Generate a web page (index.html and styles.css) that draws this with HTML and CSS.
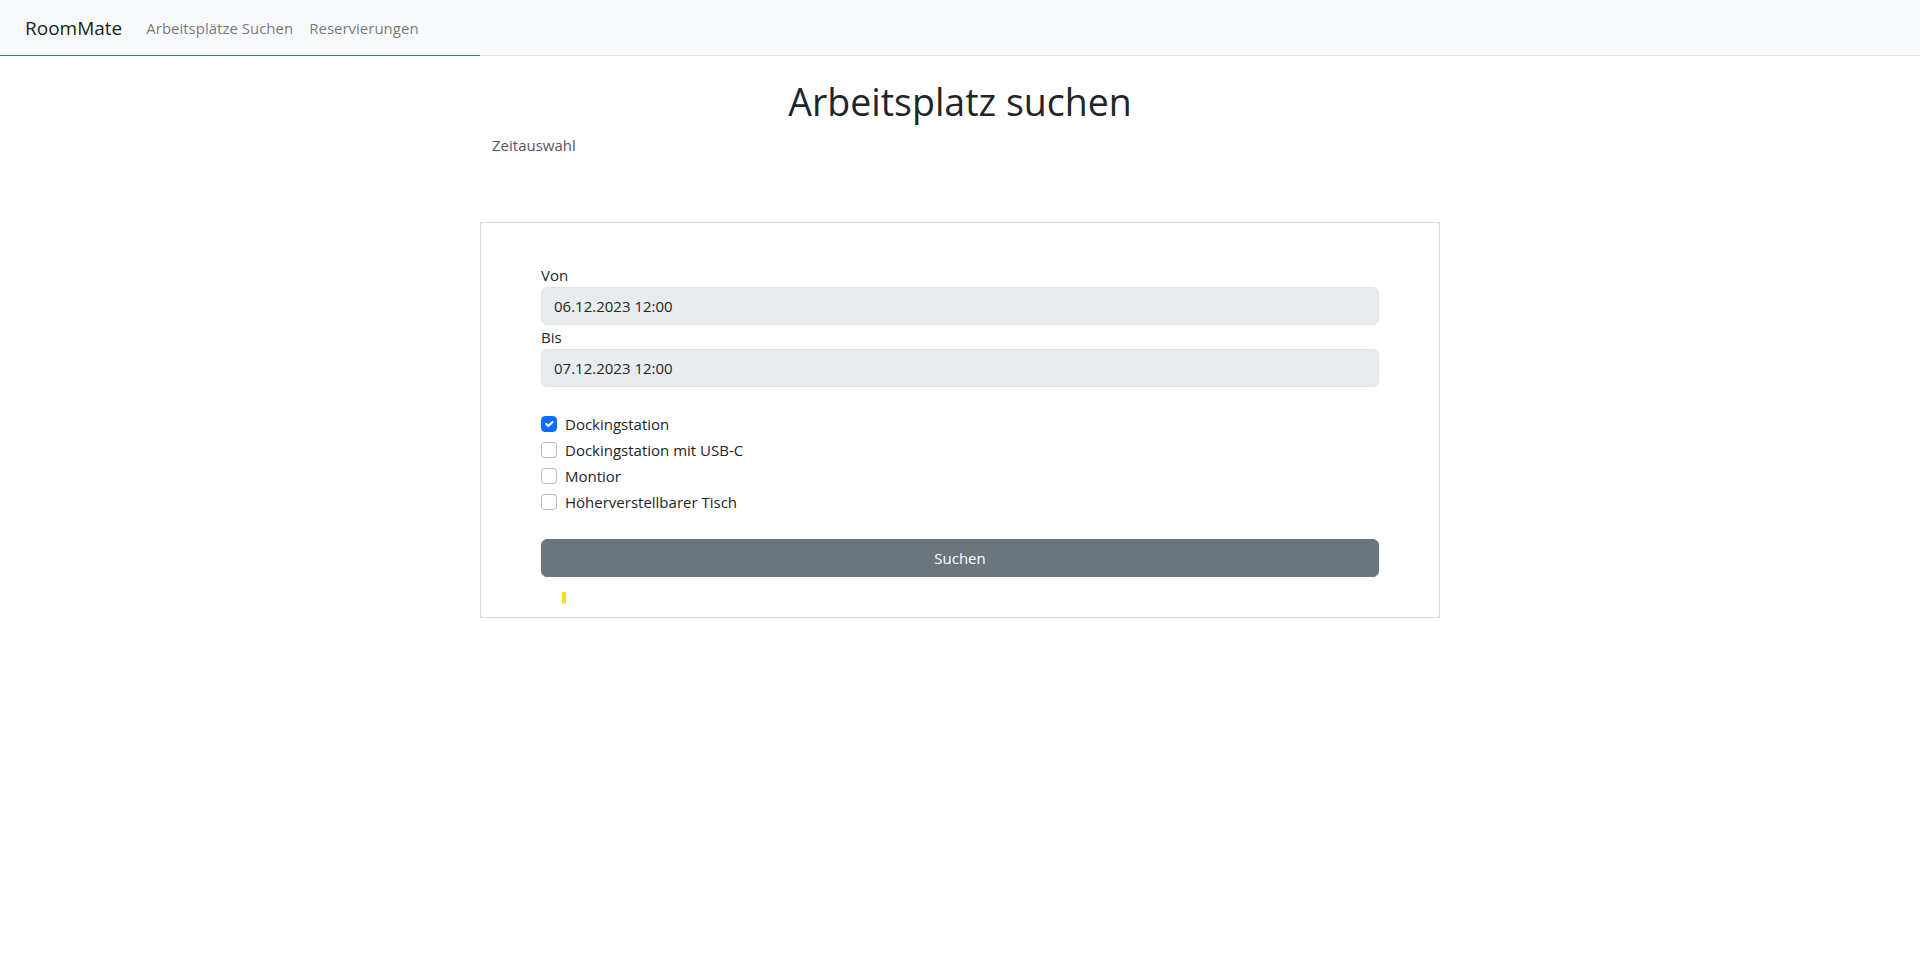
FILE: index.html
```html
<!DOCTYPE html>
<html lang="de">
<head>
<meta charset="utf-8">
<title>RoomMate</title>
<link rel="stylesheet" href="styles.css">
</head>
<body>
<nav class="navbar">
  <a class="brand" href="#">RoomMate</a>
  <ul class="nav-links">
    <li><a href="#">Arbeitsplätze Suchen</a></li>
    <li><a href="#">Reservierungen</a></li>
  </ul>
  <span class="nav-progress"></span>
</nav>
<main class="container">
  <h1 class="title">Arbeitsplatz suchen</h1>
  <div class="subnav">Zeitauswahl</div>
  <section class="card">
    <form class="search-form">
      <label class="field-label">Von</label>
      <input class="field-input" type="text" readonly value="06.12.2023 12:00">
      <label class="field-label">Bis</label>
      <input class="field-input" type="text" readonly value="07.12.2023 12:00">
      <div class="checks">
        <label class="check-row">
          <span class="check-box checked"><svg viewBox="0 0 20 20" width="16" height="16"><path d="M6 10l3 3l6-6" fill="none" stroke="#fff" stroke-width="3" stroke-linecap="round" stroke-linejoin="round"/></svg></span>
          <span class="check-text">Dockingstation</span>
        </label>
        <label class="check-row">
          <span class="check-box"></span>
          <span class="check-text">Dockingstation mit USB-C</span>
        </label>
        <label class="check-row">
          <span class="check-box"></span>
          <span class="check-text">Montior</span>
        </label>
        <label class="check-row">
          <span class="check-box"></span>
          <span class="check-text">Höherverstellbarer Tisch</span>
        </label>
      </div>
      <button class="btn-search" type="button">Suchen</button>
      <div class="status"><span class="status-mark"></span></div>
    </form>
  </section>
</main>
</body>
</html>
```

FILE: styles.css
```css
* { box-sizing: border-box; }
html, body { margin: 0; padding: 0; }
body {
  font-family: "Segoe UI", "Open Sans", "Noto Sans", sans-serif;
  font-size: 15px;
  line-height: 24px;
  color: #212529;
  background: #fff;
}
.navbar {
  position: relative;
  height: 56px;
  background: #f8f9fa;
  border-bottom: 1px solid #e6e6e6;
  display: flex;
  align-items: center;
  padding: 0 0 0 25px;
}
.brand {
  font-size: 19px;
  color: rgba(0,0,0,.9);
  text-decoration: none;
  margin-right: 16px;
  line-height: 30px;
}
.nav-links {
  list-style: none;
  display: flex;
  margin: 0;
  padding: 0;
}
.nav-links a {
  display: block;
  padding: 8px 8px;
  color: rgba(0,0,0,.55);
  text-decoration: none;
  line-height: 24px;
}
.nav-progress {
  position: absolute;
  left: 0;
  bottom: -1px;
  width: 480px;
  height: 1px;
  background: #3578b0;
}
.container {
  width: 960px;
  margin: 0 auto;
}
.title {
  margin: 22px 0 7px;
  font-size: 37.5px;
  font-weight: 400;
  line-height: 48px;
  text-align: center;
}
.subnav {
  padding-left: 12px;
  color: #555;
  line-height: 24px;
}
.card {
  margin-top: 65px;
  border: 1px solid #d4d4d4;
  padding: 40px 60px 14px;
}
.search-form {
  display: flex;
  flex-direction: column;
}
.field-label {
  line-height: 24px;
}
.field-input {
  height: 38px;
  padding: 6px 12px;
  font: inherit;
  color: #212529;
  background: #e9ecef;
  border: 1px solid #dee2e6;
  border-radius: 6px;
  outline: none;
}
.checks {
  margin-top: 25px;
  display: flex;
  flex-direction: column;
}
.check-row {
  display: flex;
  align-items: flex-start;
  min-height: 24px;
  margin-bottom: 2px;
}
.check-box {
  width: 16px;
  height: 16px;
  margin-top: 4px;
  margin-right: 8px;
  border: 1px solid rgba(0,0,0,.25);
  border-radius: 4px;
  background: #fff;
  display: flex;
  align-items: center;
  justify-content: center;
  flex: none;
}
.check-box.checked {
  background: #0d6efd;
  border-color: #0d6efd;
}
.check-box svg { display: block; }
.check-text { line-height: 24px; }
.btn-search {
  margin-top: 23px;
  height: 38px;
  font: inherit;
  color: #fff;
  background: #6c757d;
  border: 1px solid #6c757d;
  border-radius: 6px;
}
.status {
  margin-top: 15px;
  height: 11px;
  display: flex;
}
.status-mark {
  margin-left: 21px;
  width: 4px;
  height: 11px;
  background: #f7e010;
}
```
